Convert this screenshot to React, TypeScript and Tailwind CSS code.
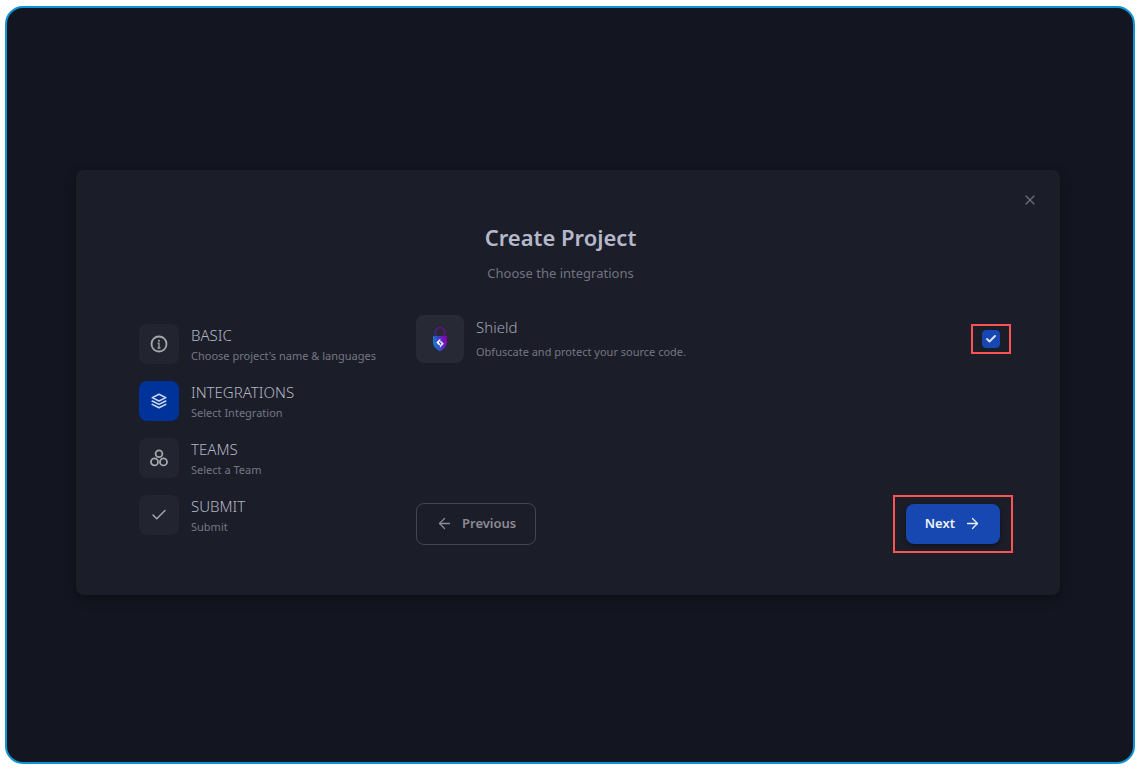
import React, { useState } from "react";
import { ArrowLeft, ArrowRight, Check, X } from "lucide-react";

const InfoIcon = () => (
  <svg width="20" height="20" viewBox="0 0 20 20" fill="none" stroke="currentColor" strokeWidth="1.8">
    <circle cx="10" cy="10" r="7.5" />
    <path d="M8.600 9.200H10v4.800M8.600 14h2.800" strokeWidth="1.3" />
    <circle cx="10" cy="6.800" r="1" fill="currentColor" stroke="none" />
  </svg>
);

const LayersIcon = () => (
  <svg width="18" height="18" viewBox="0 0 24 24" fill="none" stroke="currentColor" strokeWidth="2.2" strokeLinejoin="round" strokeLinecap="round">
    <path d="M12 3 3 7.5l9 4.5 9-4.5L12 3Z" />
    <path d="m3 12 9 4.5 9-4.5" />
    <path d="m3 16.5 9 4.5 9-4.5" />
  </svg>
);

const TeamsIcon = () => (
  <svg width="20" height="20" viewBox="0 0 20 20" fill="none" stroke="currentColor" strokeWidth="1.8">
    <circle cx="10" cy="5.7" r="3.4" />
    <circle cx="5.5" cy="13.9" r="3.5" />
    <circle cx="14.5" cy="13.9" r="3.5" />
  </svg>
);

const ShieldLogo = () => (
  <svg width="16" height="26" viewBox="0 0 16 26" fill="none">
    <defs>
      <linearGradient id="shieldBody" x1="1" y1="18" x2="15" y2="14" gradientUnits="userSpaceOnUse">
        <stop stopColor="#0b86d2" />
        <stop offset="0.5" stopColor="#4a35c4" />
        <stop offset="1" stopColor="#8a00b0" />
      </linearGradient>
      <linearGradient id="shieldLock" x1="3" y1="9" x2="13" y2="2" gradientUnits="userSpaceOnUse">
        <stop stopColor="#3c2a92" />
        <stop offset="1" stopColor="#7c0098" />
      </linearGradient>
    </defs>
    <path d="M3.500 11V6a4.500 4.500 0 0 1 9 0v5" stroke="url(#shieldLock)" strokeWidth="1.500" />
    <path d="M1 10h14v6c0 4.300-3 7.200-7 9.200C4 23.200 1 20.300 1 16v-6Z" fill="url(#shieldBody)" />
    <path d="M8.300 12.500 4.300 16.500l3 3 1.200-1.200-1.800-1.800 1.600-1.600v-2.400Z" fill="#fff" />
    <path d="m7.900 21.700 4-4-3-3-1.200 1.200 1.800 1.800-1.600 1.600v2.400Z" fill="#e6dcff" />
  </svg>
);

const steps = [
  { title: "BASIC", subtitle: "Choose project's name & languages", icon: <InfoIcon /> },
  { title: "INTEGRATIONS", subtitle: "Select Integration", icon: <LayersIcon /> },
  { title: "TEAMS", subtitle: "Select a Team", icon: <TeamsIcon /> },
  { title: "SUBMIT", subtitle: "Submit", icon: <Check size={18} strokeWidth={2} /> },
];

const App = () => {
  const [activeStep, setActiveStep] = useState(1);
  const [shield, setShield] = useState(true);

  return (
    <div className="flex min-h-screen bg-white px-[5px] pt-[6px] pb-1 font-['Noto_Sans','Open_Sans',sans-serif]">
      <div className="flex flex-1 items-center rounded-[18px] border-2 border-[#0d94d2] bg-[#131620] pr-[73px] pb-[6px] pl-[69px]">
        <div className="relative w-full rounded-lg bg-[#1b1d29] pt-[51px] pr-[60px] pb-[50px] pl-[63px] shadow-[0_4px_10px_2px_rgba(0,0,0,0.25)]">
          <button type="button" aria-label="Close" className="absolute top-5 right-5 p-[2px] text-[#6b6d7a]">
            <X size={16} strokeWidth={1.800} />
          </button>
          <div className="pr-[18px] text-center">
            <h1 className="text-[22px] leading-8 font-semibold text-[#b6b8c9]">Create Project</h1>
            <p className="mt-2 text-[13px] leading-6 text-[#717380]">Choose the integrations</p>
          </div>

          <div className="mt-[30px] flex">
            <ol className="mt-[9px] mb-[10px] flex w-[277px] shrink-0 flex-col gap-[17px]">
              {steps.map((step, index) => (
                <li key={step.title}>
                  <button type="button" onClick={() => setActiveStep(index)} className="flex h-10 items-center gap-3 text-left">
                    <span
                      className={
                        index === activeStep
                          ? "flex size-10 items-center justify-center rounded-lg bg-[#003399] text-[#c9d5ee]"
                          : "flex size-10 items-center justify-center rounded-lg bg-[#222530] text-[#a5a6ac]"
                      }
                    >
                      {step.icon}
                    </span>
                    <span className="flex flex-col pt-1">
                      <span className="text-[15px] leading-5 font-light text-[#b4b6c2]">{step.title}</span>
                      <span className="text-[11px] leading-[22px] text-[#757784]">{step.subtitle}</span>
                    </span>
                  </button>
                </li>
              ))}
            </ol>

            <div className="flex flex-1 flex-col justify-between">
              <div className="flex h-12 items-center">
                <span className="flex size-12 items-center justify-center rounded-lg bg-[#272935]">
                  <ShieldLogo />
                </span>
                <label htmlFor="shield" className="ml-3 flex flex-1 flex-col pt-[2px]">
                  <span className="text-[15px] leading-6 font-light text-[#a3a5b2]">Shield</span>
                  <span className="text-[11px] leading-[26px] text-[#757784]">Obfuscate and protect your source code.</span>
                </label>
                <span className="relative flex size-[18px] items-center justify-center">
                  <input
                    id="shield"
                    type="checkbox"
                    checked={shield}
                    onChange={(e) => setShield(e.target.checked)}
                    className="size-[18px] appearance-none rounded-sm border border-[#1747b0] checked:bg-[#1747b0]"
                  />
                  {shield && <Check size={12} strokeWidth={4} className="pointer-events-none absolute text-[#d5def3]" />}
                  <span className="pointer-events-none absolute -inset-x-[11px] -inset-y-[6px] border-2 border-[#ff5252]" />
                </span>
              </div>

              <div className="flex items-center justify-between">
                <button
                  type="button"
                  onClick={() => setActiveStep(Math.max(activeStep - 1, 0))}
                  className="flex h-[42px] items-center gap-[9px] rounded-lg border border-[#434550] px-[19px] text-[13px] font-semibold text-[#8b8c93]"
                >
                  <ArrowLeft size={17} strokeWidth={1.800} />
                  Previous
                </button>
                <span className="relative">
                  <button
                    type="button"
                    onClick={() => setActiveStep(Math.min(activeStep + 1, steps.length - 1))}
                    className="flex h-10 items-center gap-[9px] rounded-lg bg-[#1747b0] px-[19px] text-[13px] font-semibold text-[#eef2fb] shadow-[0_2px_5px_rgba(0,0,0,0.4)]"
                  >
                    Next
                    <ArrowRight size={17} strokeWidth={1.800} />
                  </button>
                  <span className="pointer-events-none absolute -inset-x-[13px] -inset-y-[9px] border-2 border-[#ff5252]" />
                </span>
              </div>
            </div>
          </div>
        </div>
      </div>
    </div>
  );
};

export default App;
